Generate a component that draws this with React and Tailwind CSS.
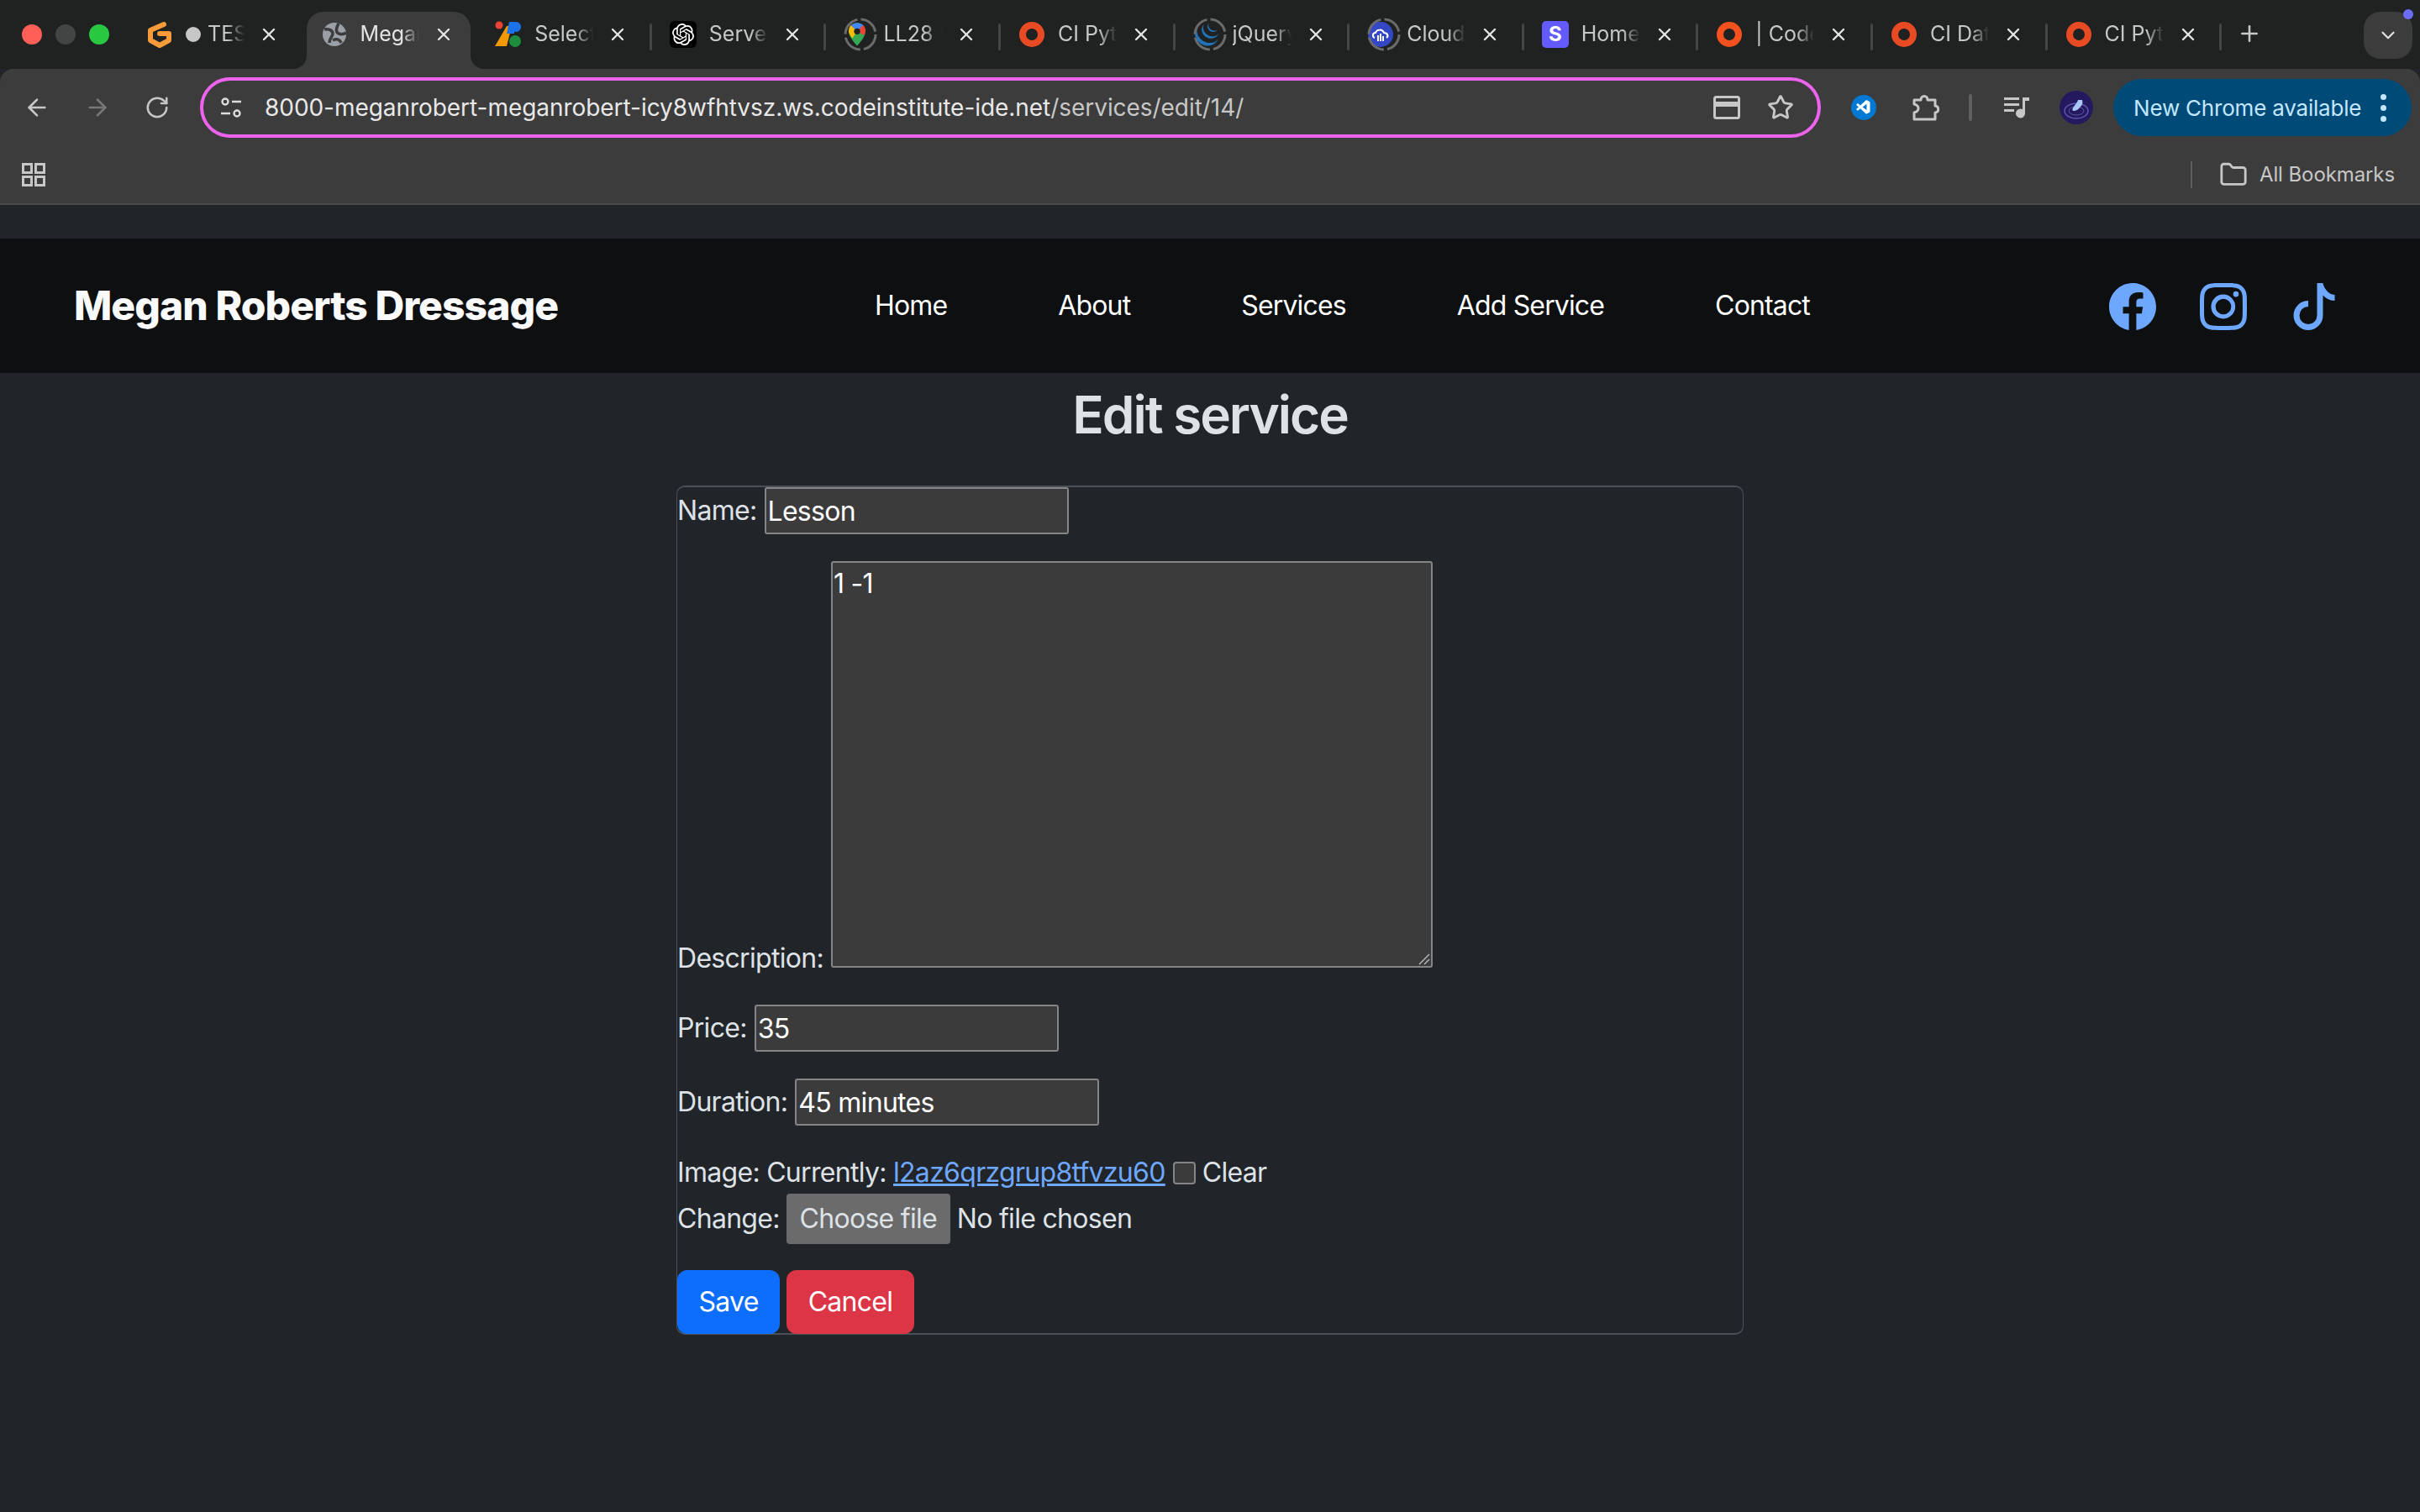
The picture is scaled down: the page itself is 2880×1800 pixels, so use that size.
import { ArrowLeft, ArrowRight, ChevronDown, Folder, Plus, RotateCw, Star, X } from "lucide-react";
import { BsFacebook, BsInstagram, BsTiktok } from "react-icons/bs";
import { SiJquery, SiOpenai } from "react-icons/si";
import { VscVscode } from "react-icons/vsc";

function GamaIcon() {
  return (
    <svg width="30" height="32" viewBox="0 0 30 32" fill="none" stroke="#f79a3a" strokeWidth="6" strokeLinejoin="round" strokeLinecap="round">
      <path d="M20 4 4 11v12l11 6 11-6v-8H15" />
    </svg>
  );
}

function GlobeIcon() {
  return (
    <svg width="30" height="30" viewBox="0 0 30 30" fill="none" stroke="#3c3c3c" strokeWidth="3.5">
      <circle cx="15" cy="15" r="14" fill="#9aa0a6" stroke="none" />
      <path d="M3 9c5-1 10 1 10 5s-4 5-4 11" />
      <path d="M20 2c-3 5-4 10 0 12 3 1 6 1 9-1" />
      <path d="M13 22c4-2 8-2 10 3" />
    </svg>
  );
}

function MultiColorIcon() {
  return (
    <svg width="32" height="32" viewBox="0 0 32 32">
      <circle cx="5" cy="5" r="4.5" fill="#ea4335" />
      <path d="M14 6h6l-6 24H0z" fill="#f29900" />
      <path d="M17 1h6v14h-9z" fill="#1a73e8" />
      <circle cx="25" cy="7" r="6" fill="#1a73e8" />
      <circle cx="24" cy="24" r="7" fill="#1e8e3e" />
    </svg>
  );
}

function DashedRing({ children }) {
  return (
    <div className="relative w-[40px] h-[40px] flex items-center justify-center">
      <svg className="absolute inset-0" width="40" height="40" viewBox="0 0 40 40" fill="none" stroke="#6b6b6b" strokeWidth="3">
        <circle cx="20" cy="20" r="18" strokeDasharray="24 4.3" />
      </svg>
      {children}
    </div>
  );
}

function MapsIcon() {
  return (
    <DashedRing>
      <svg width="20" height="28" viewBox="0 0 22 30">
        <path d="M11 0C5 0 0 5 0 11c0 8 11 19 11 19s11-11 11-19C22 5 17 0 11 0z" fill="#34a853" />
        <path d="M3 3 11 11 5 20C2 17 0 13 0 11 0 8 1 5 3 3z" fill="#fbbc04" />
        <path d="M3 3C5 1 8 0 11 0c3 0 6 1 8 3l-8 8z" fill="#4285f4" />
        <path d="M19 3c2 2 3 5 3 8 0 1-1 3-2 5l-9-5z" fill="#ea4335" />
        <circle cx="11" cy="11" r="4" fill="#202222" />
      </svg>
    </DashedRing>
  );
}

function RingIcon({ color = "#e84a23" }) {
  return <div className="w-[30px] h-[30px] rounded-full border-[8px]" style={{ borderColor: color }} />;
}

function JqueryIcon() {
  return (
    <DashedRing>
      <SiJquery size={28} className="text-[#1f74b8]" />
    </DashedRing>
  );
}

function CloudIcon() {
  return (
    <DashedRing>
      <div className="w-[30px] h-[30px] rounded-full bg-[#3448c5] flex items-center justify-center">
        <svg width="22" height="18" viewBox="0 0 22 18" fill="none" stroke="#fff" strokeWidth="2">
          <path d="M4 13C1 12 1 7 5 7c1-4 8-5 10 0 4 0 6 4 3 6" />
          <path d="M8 10v7M11 8v9M14 11v6" />
        </svg>
      </div>
    </DashedRing>
  );
}

function StripeIcon() {
  return (
    <div className="w-[32px] h-[32px] rounded-[5px] bg-[#635bff] flex items-center justify-center">
      <span className="text-white text-[24px] font-bold">S</span>
    </div>
  );
}

function OpenAiIcon() {
  return (
    <div className="w-[32px] h-[32px] rounded-[6px] bg-black flex items-center justify-center">
      <SiOpenai size={26} className="text-white" />
    </div>
  );
}

const tabs = [
  { title: "TES", icon: <GamaIcon />, dot: true },
  { title: "Megan", icon: <GlobeIcon />, active: true },
  { title: "Select", icon: <MultiColorIcon /> },
  { title: "Server", icon: <OpenAiIcon /> },
  { title: "LL28 5", icon: <MapsIcon /> },
  { title: "CI Pyt", icon: <RingIcon /> },
  { title: "jQuery", icon: <JqueryIcon /> },
  { title: "Cloud", icon: <CloudIcon /> },
  { title: "Home", icon: <StripeIcon /> },
  { title: "| Code", icon: <RingIcon color="#f4511e" /> },
  { title: "CI Dat", icon: <RingIcon /> },
  { title: "CI Pyt", icon: <RingIcon /> },
];

function ActiveTabShape() {
  return (
    <div className="absolute left-[2px] top-0 w-[195px] h-[68px] bg-[#3c3c3c] rounded-t-[20px]">
      <div className="absolute left-[-16px] bottom-0 w-[16px] h-[16px] bg-[#3c3c3c]">
        <div className="w-full h-full bg-[#202222] rounded-br-[16px]" />
      </div>
      <div className="absolute right-[-16px] bottom-0 w-[16px] h-[16px] bg-[#3c3c3c]">
        <div className="w-full h-full bg-[#202222] rounded-bl-[16px]" />
      </div>
    </div>
  );
}

function Tab({ tab, showSep }) {
  return (
    <div className="relative w-[207.6px] h-[68px] shrink-0 flex items-center pl-[19px] pb-[14px]">
      {tab.active && <ActiveTabShape />}
      <div className="relative w-[32px] flex items-center justify-center shrink-0">{tab.icon}</div>
      <div className="relative flex items-center ml-[15px] w-[70px] overflow-hidden shrink-0 [mask-image:linear-gradient(to_right,black_70%,transparent)]">
        {tab.dot && <span className="w-[18px] h-[18px] rounded-full bg-[#c7c7c7] mr-[8px] shrink-0" />}
        <span className={`text-[25px] whitespace-nowrap ${tab.active ? "text-[#e3e3e3]" : "text-[#c7c7c7]"}`}>{tab.title}</span>
      </div>
      <X size={24} strokeWidth={2.4} className="relative ml-[17px] text-[#e3e3e3]" />
      {showSep && <div className="absolute right-[2px] top-[14px] w-[3px] h-[32px] rounded-full bg-[#444646]" />}
    </div>
  );
}

function TabStrip() {
  return (
    <div className="h-[82px] bg-[#202222] flex items-start pl-[155px] pt-[14px]">
      <div className="absolute left-[26px] top-[29px] flex gap-[16px]">
        <span className="w-[24px] h-[24px] rounded-full bg-[#ff5f57]" />
        <span className="w-[24px] h-[24px] rounded-full bg-[#434545]" />
        <span className="w-[24px] h-[24px] rounded-full bg-[#28c840]" />
      </div>
      {tabs.map((tab, i) => (
        <Tab key={i} tab={tab} showSep={i > 1} />
      ))}
      <Plus size={30} strokeWidth={2} className="ml-[16px] mt-[11px] text-[#c7c7c7]" />
      <div className="relative ml-[121px] w-[58px] h-[56px] rounded-[20px] bg-[#3c3c3c] flex items-center justify-center">
        <ChevronDown size={26} className="text-[#e3e3e3]" />
        <span className="absolute right-[-1px] top-[-3px] w-[12px] h-[12px] rounded-full bg-[#6a6cf6]" />
      </div>
    </div>
  );
}

function TuneIcon() {
  return (
    <svg width="26" height="26" viewBox="0 0 26 26" fill="none" stroke="#dcdcdc" strokeWidth="2.4">
      <circle cx="6" cy="6" r="3.5" />
      <path d="M14 6h11M1 20h11" />
      <circle cx="20" cy="20" r="3.5" />
    </svg>
  );
}

function CardIcon() {
  return (
    <svg width="32" height="28" viewBox="0 0 32 28" fill="none" stroke="#c7c7c7" strokeWidth="3">
      <rect x="1.5" y="1.5" width="29" height="25" rx="2" />
      <path d="M1.5 10h29" strokeWidth="6" />
    </svg>
  );
}

function VscodeBadge() {
  return (
    <div className="w-[30px] h-[30px] rounded-full bg-[#0078d4] flex items-center justify-center">
      <VscVscode size={20} className="text-white" />
    </div>
  );
}

function ExtensionIcon() {
  return (
    <svg width="32" height="32" viewBox="0 0 32 32" fill="none" stroke="#c7c7c7" strokeWidth="3" strokeLinejoin="round">
      <path d="M2 7h8c0-6 8-6 8 0h9v7c5 0 5 8 0 8v8H2v-8c4-1 5-3 5-5s-1-4-5-5z" />
    </svg>
  );
}

function MediaIcon() {
  return (
    <svg width="30" height="26" viewBox="0 0 30 26" fill="#c7c7c7">
      <path d="M0 1h18v3H0zM0 8h18v3H0zM0 15h12v3H0z" />
      <path d="M22 1h8v4h-5v15a5.500 5.500 0 1 1-3-4.900z" />
    </svg>
  );
}

function AvatarIcon() {
  return (
    <svg width="40" height="40" viewBox="0 0 40 40">
      <circle cx="20" cy="20" r="20" fill="#24195e" />
      <ellipse cx="20" cy="24" rx="14" ry="9" fill="none" stroke="#5d56a8" strokeWidth="1.5" />
      <ellipse cx="20" cy="24" rx="9" ry="5" fill="none" stroke="#5d56a8" strokeWidth="1" />
      <path d="M22 11h5c1 4 0 6-2 8-2 3-5 5-9 5-3-3 5-8 6-13z" fill="#a9c6f5" />
    </svg>
  );
}

function AppsIcon() {
  return (
    <svg width="28" height="28" viewBox="0 0 28 28" fill="none" stroke="#c7c7c7" strokeWidth="3">
      <rect x="1.5" y="1.500" width="10" height="10" />
      <rect x="16.5" y="1.500" width="10" height="10" />
      <rect x="1.5" y="16.500" width="10" height="10" />
      <rect x="16.5" y="16.500" width="10" height="10" />
    </svg>
  );
}

function Toolbar() {
  return (
    <div className="h-[162px] bg-[#3c3c3c] rounded-t-[16px] border-b-2 border-[#4a4a4a]">
      <div className="h-[92px] pt-[10px] flex items-start">
        <div className="w-[238px] h-[72px] flex items-center pl-[28px] gap-[40px] shrink-0">
          <ArrowLeft size={32} strokeWidth={2} className="text-[#c7c7c7]" />
          <ArrowRight size={32} strokeWidth={2} className="text-[#777777]" />
          <RotateCw size={30} strokeWidth={2} className="text-[#c7c7c7]" />
        </div>
        <div className="w-[1929px] h-[72px] shrink-0 rounded-full border-4 border-[#ee63ee] flex items-center pl-[20px] pr-[28px]">
          <TuneIcon />
          <span className="ml-[27px] text-[28px] tracking-[-0.05px] text-[#e8e8e8]">
            8000-meganrobert-meganrobert-icy8wfhtvsz.ws.codeinstitute-ide.net<span className="text-[#c7c7c7]">/services/edit/14/</span>
          </span>
          <div className="ml-auto flex items-center gap-[32px]">
            <CardIcon />
            <Star size={32} strokeWidth={2.2} className="text-[#c7c7c7]" />
          </div>
        </div>
        <div className="h-[72px] flex items-center">
          <div className="ml-[36px]"><VscodeBadge /></div>
          <div className="ml-[43px]"><ExtensionIcon /></div>
          <div className="ml-[35px] w-[4px] h-[32px] rounded-full bg-[#5f5f5f]" />
          <div className="ml-[38px]"><MediaIcon /></div>
          <div className="ml-[36px]"><AvatarIcon /></div>
          <div className="ml-[24px] w-[355px] h-[68px] rounded-full bg-[#004a77] flex items-center pl-[24px]">
            <span className="text-[26px] tracking-[-0.2px] text-[#c2e7ff] whitespace-nowrap">New Chrome available</span>
            <div className="ml-[23px] flex flex-col gap-[6px]">
              <span className="w-[7px] h-[7px] rounded-full bg-[#c2e7ff]" />
              <span className="w-[7px] h-[7px] rounded-full bg-[#c2e7ff]" />
              <span className="w-[7px] h-[7px] rounded-full bg-[#c2e7ff]" />
            </div>
          </div>
        </div>
      </div>
      <div className="h-[68px] flex items-center pl-[26px]">
        <AppsIcon />
        <div className="ml-auto w-[2px] h-[32px] bg-[#5f5f5f]" />
        <Folder size={34} strokeWidth={2} className="ml-[32px] text-[#c7c7c7]" />
        <span className="ml-[14px] mr-[30px] text-[24px] tracking-[-0.1px] text-[#c7c7c7]">All Bookmarks</span>
      </div>
    </div>
  );
}

function Navbar() {
  return (
    <nav className="h-[160px] mt-[40px] bg-[#0d0f11] flex items-center pl-[88px] shrink-0">
      <span className="w-[953px] text-[48px] font-extrabold tracking-[-0.94px] text-[#fafafa] whitespace-nowrap">Megan Roberts Dressage</span>
      <div className="flex items-center gap-[132px] text-[32px] tracking-[-0.85px] text-white">
        <span>Home</span>
        <span>About</span>
        <span>Services</span>
        <span>Add Service</span>
        <span>Contact</span>
      </div>
      <div className="ml-auto mr-[98px] mt-[2px] flex items-center gap-[52px] text-[#6ea8fe]">
        <BsFacebook size={56} />
        <BsInstagram size={56} />
        <BsTiktok size={56} />
      </div>
    </nav>
  );
}

function EditForm() {
  const field = "w-[362px] h-[56px] px-[2px] bg-[#3b3b3b] border-2 border-[#858585] rounded-[3px] text-white text-[32px] outline-none";
  return (
    <form className="w-[1270px] h-[1011px] mx-auto mt-[47px] border-x border-y-2 border-[#495057] rounded-[10px] text-[32px] tracking-[-0.7px] text-[#dee2e6] flex flex-col">
      <label className="h-[56px] flex items-center gap-[9px] shrink-0">
        Name:
        <input className={field} defaultValue="Lesson" readOnly />
      </label>
      <label className="mt-[32px] flex items-end gap-[9px] shrink-0">
        <span className="mb-[-13px]">Description:</span>
        <div className="relative">
          <textarea className="w-[716px] h-[484px] block resize-none px-[1px] bg-[#3b3b3b] border-2 border-[#858585] rounded-[3px] text-white text-[32px] leading-[50px] outline-none" defaultValue="1 -1" readOnly />
          {/* resize grip */}
          <svg className="absolute right-[3px] bottom-[3px]" width="14" height="14" viewBox="0 0 14 14" fill="none" stroke="#b5b5b5" strokeWidth="1.5">
            <path d="M1 13 13 1M7 13l6-6" />
          </svg>
        </div>
      </label>
      <label className="mt-[44px] h-[56px] flex items-center gap-[9px] shrink-0">
        Price:
        <input className={field} defaultValue="35" readOnly />
      </label>
      <label className="mt-[32px] h-[56px] flex items-center gap-[9px] shrink-0">
        Duration:
        <input className={field} defaultValue="45 minutes" readOnly />
      </label>
      <div className="mt-[33px] h-[46px] flex items-center shrink-0 whitespace-pre">
        Image: Currently: <a className="text-[#6ea8fe] underline">l2az6qrzgrup8tfvzu60</a>
        <span className="ml-[9px] w-[27px] h-[27px] rounded-[4px] bg-[#3b3b3b] border-2 border-[#858585]" />
        <span className="ml-[8px]">Clear</span>
      </div>
      <div className="mt-[2px] h-[60px] flex items-center shrink-0">
        Change:
        <span className="ml-[8px] w-[195px] h-[60px] rounded-[4px] bg-[#6b6b6b] flex items-center justify-center">Choose file</span>
        <span className="ml-[8px]">No file chosen</span>
      </div>
      <div className="mt-[31px] flex gap-[8px] shrink-0">
        <button type="button" className="w-[122px] h-[76px] rounded-[12px] bg-[#0d6efd] text-white">Save</button>
        <button type="button" className="w-[152px] h-[76px] rounded-[12px] bg-[#dc3545] text-white">Cancel</button>
      </div>
    </form>
  );
}

export default function App() {
  return (
    <div className="relative w-[2880px] h-[1800px] bg-[#212529] flex flex-col overflow-hidden font-['Inter',sans-serif]">
      <TabStrip />
      <Toolbar />
      <Navbar />
      <h1 className="mt-[13px] text-center text-[62px] leading-[1.2] font-semibold tracking-[-2px] text-[#dee2e6]">Edit service</h1>
      <EditForm />
    </div>
  );
}
